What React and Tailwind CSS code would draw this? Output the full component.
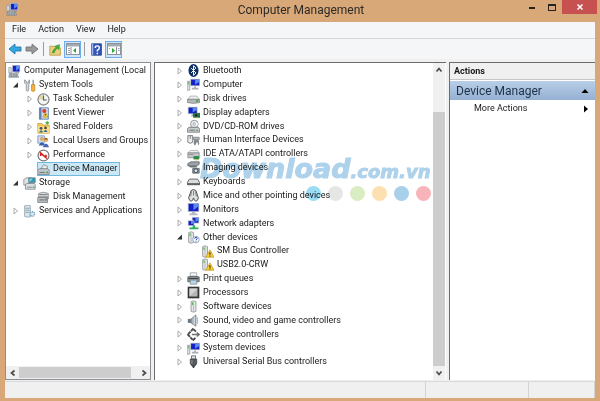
import React, { useState } from "react";
import clsx from "clsx";

/* ---------- icons ---------- */

function Svg({ children, className = "h-[13px] w-[13px]" }) {
  return (
    <svg viewBox="0 0 16 16" className={clsx("shrink-0", className)} aria-hidden="true">
      {children}
    </svg>
  );
}

const Screen = ({ x = 4, y = 1, w = 11, h = 9 }) => (
  <>
    <rect x={x} y={y} width={w} height={h} fill="#b9bfca" />
    <rect x={x + 1} y={y + 1} width={w - 2} height={h - 2} fill="#1420c8" />
    <path d={`M${x + w / 2} ${y + 1}H${x + w - 1}V${y + 4}L${x + w / 2} ${y + h - 2}Z`} fill="#5b8df0" />
  </>
);

const Tower = ({ x = 4 }) => (
  <>
    <path d={`M${x} 2l3-1 3 1v12l-3 1-3-1z`} fill="#e3e5e6" stroke="#85898c" strokeWidth=".9" />
    <path d={`M${x + 3} 3v11`} stroke="#b3b7b9" />
    <rect x={x + 1} y="3" width="1.5" height="3" fill="#4db848" />
  </>
);

const ICONS = {
  management: (
    <>
      <Screen x={5} y={0} w={10} h={9} />
      <path d="M1 3h3v7H1z" fill="#dfe3e8" stroke="#8d949c" strokeWidth=".8" />
      <path d="M2 10h9l2 5H1z" fill="#b9bfc6" stroke="#707880" strokeWidth=".8" />
      <path d="M3 12h8M3 13.7h8" stroke="#59626b" strokeWidth=".8" strokeDasharray="2 1" />
      <path d="M9 9h4v2" fill="none" stroke="#8c939b" />
    </>
  ),
  tools: (
    <>
      <path d="M2 1v4l2 2v7q1.500 2 3 0V7l1-2V1L6.500 3v2h-2V3z" fill="#d7dadd" stroke="#7c8388" strokeWidth=".9" />
      <path d="M12.500 1v7" stroke="#8b9095" strokeWidth="1.600" />
      <path d="M10.500 7h4v7.500q-2 1.500-4 0z" fill="#f5b43a" stroke="#b97a17" strokeWidth=".8" />
    </>
  ),
  clock: (
    <>
      <circle cx="8" cy="8" r="6.800" fill="#f4f4f0" stroke="#818487" strokeWidth="1.500" />
      <path d="M8 8V2.500A5.500 5.500 0 0 0 2.500 8z" fill="#e0d7a6" />
      <path d="M8 3v5.500h4" fill="none" stroke="#4b5c74" strokeWidth="1.300" />
    </>
  ),
  event: (
    <>
      <path d="M3 1h11v14H3z" fill="#c9dcf3" stroke="#5676a8" />
      <path d="M3 1h2.500v14H3z" fill="#5f80b6" />
      <circle cx="9" cy="5" r="2.600" fill="#e33a2a" />
      <path d="M10.500 6.500l3 6H7z" fill="#f8cf35" stroke="#b58d11" strokeWidth=".7" />
      <path d="M10.400 8.500v2" stroke="#333" />
    </>
  ),
  sharedFolder: (
    <>
      <path d="M1 3h5l1 2h8v10H1z" fill="#f3cc62" stroke="#c09330" strokeWidth=".9" />
      <path d="M1 7h14v8H1z" fill="#f9de8d" />
      <circle cx="5" cy="9" r="1.700" fill="#3e4f6e" />
      <path d="M2.500 14q2.500-5 5 0z" fill="#3c7b58" />
      <circle cx="10.500" cy="8.500" r="1.700" fill="#5f4630" />
      <path d="M8 13.500q2.500-5 5 0z" fill="#3667a8" />
      <path d="M10 2l3-2 2 2-2 3z" fill="#49b545" />
    </>
  ),
  users: (
    <>
      <path d="M1 1h8v9H1z" fill="#cfe0f6" stroke="#6484b8" strokeWidth=".9" />
      <circle cx="6" cy="5" r="2.500" fill="#dba867" />
      <path d="M2 13q4-8 8 0z" fill="#3761a8" />
      <circle cx="11" cy="6" r="2.700" fill="#e2b16c" />
      <path d="M8.400 5.500q2.500-4 5.200 0z" fill="#8a5b1e" />
      <path d="M7 15q4-9 8 0z" fill="#4c66b4" />
    </>
  ),
  performance: (
    <>
      <circle cx="8" cy="8" r="6.700" fill="#fff" stroke="#77797b" strokeWidth="1.500" />
      <path d="M4.500 8.500V5L11 10.500V7" fill="none" stroke="#d5211b" strokeWidth="2" />
    </>
  ),
  deviceManager: (
    <>
      <path d="M5 7l3-5 5 2-1 5z" fill="#e9ebec" stroke="#7b8186" strokeWidth=".9" />
      <path d="M1 9l2-2h10l2 2v5H1z" fill="#c3c8cb" stroke="#686e73" strokeWidth=".9" />
      <path d="M3 11.500h7" stroke="#596066" />
      <rect x="11.500" y="10.500" width="2" height="2" fill="#3aa83a" />
    </>
  ),
  storage: (
    <>
      <path d="M1 3l3-2h5v9H1z" fill="#dfe3e5" stroke="#7e868b" strokeWidth=".9" />
      <path d="M7 1h8v6H7z" fill="#2f9bb4" stroke="#6a7b82" strokeWidth=".9" />
      <path d="M8 2h4l-4 4z" fill="#86dcea" />
      <path d="M3 9l2-1h9l1 1v6H3z" fill="#dde0e2" stroke="#757c81" strokeWidth=".9" />
      <path d="M5 12.500h6" stroke="#777" />
      <rect x="12" y="11.500" width="2" height="2" fill="#44b53f" />
    </>
  ),
  disk: (
    <>
      <path d="M2 3q6-3 12 0v4H2z" fill="#d9dcde" stroke="#7a8084" strokeWidth=".9" />
      <path d="M3 4.500h10" stroke="#5e6468" />
      <path d="M1 8h12v6H1z" fill="#bfc4c7" stroke="#63696d" strokeWidth=".9" />
      <path d="M3 11h6" stroke="#4f5559" />
      <path d="M9 10l5-3 1 2-5 4z" fill="#8a9094" />
    </>
  ),
  services: (
    <>
      <path d="M2 1l4-1 3 1v13l-3 1-4-1z" fill="#dce5ea" stroke="#8198a5" strokeWidth=".9" />
      <path d="M3 4h5M3 6.500h5M3 9h5" stroke="#8299a5" />
      <circle cx="11.500" cy="11" r="2.700" fill="#dcecf6" stroke="#6a9cbd" strokeWidth="1.600" strokeDasharray="1.500 .7" />
      <circle cx="8.500" cy="14" r="1.300" fill="#9fc4da" />
    </>
  ),
  bluetooth: (
    <>
      <ellipse cx="8" cy="8" rx="6.200" ry="7.900" fill="#0d2f63" />
      <path d="M5 5l6 6-3 3V2l3 3-6 6" fill="none" stroke="#fff" strokeWidth="1.200" />
    </>
  ),
  computer: (
    <>
      <Screen x={4} y={1} w={12} h={9} />
      <path d="M9 10h2v2h3v2H6v-2h3z" fill="#a9afb6" />
      <path d="M0 4h3.500v11H0z" fill="#dadde0" stroke="#8c9298" strokeWidth=".8" />
      <rect x="1" y="5" width="1.500" height="3" fill="#65b65c" />
    </>
  ),
  diskDrive: (
    <>
      <path d="M1 9l3-4h8l3 4z" fill="#eceeee" stroke="#999d9f" strokeWidth=".8" />
      <path d="M0.500 9h15v4q-7.500 2-15 0z" fill="#b5b9bb" stroke="#6d7173" strokeWidth=".8" />
      <rect x="11" y="10" width="3" height="2" fill="#38a838" />
    </>
  ),
  display: (
    <>
      <Screen x={1} y={1} w={12} h={9} />
      <path d="M6 10h3v3H5z" fill="#a6acb3" />
      <path d="M8 9h8v5H8z" fill="#257849" stroke="#194e33" strokeWidth=".7" />
      <path d="M9 14.500h6" stroke="#d1ad3d" strokeDasharray="1 .7" />
      <rect x="10" y="10.500" width="2.500" height="2" fill="#111" />
    </>
  ),
  dvd: (
    <>
      <circle cx="9" cy="5" r="4.700" fill="#e7e9ea" stroke="#868b8e" />
      <path d="M9 5l4-2v4z" fill="#fff" />
      <circle cx="9" cy="5" r="1.400" fill="#fff" stroke="#858a8e" strokeWidth=".8" />
      <path d="M2 9h12l1.500 2v4H.5v-4z" fill="#c7cbcd" stroke="#666c70" strokeWidth=".9" />
      <path d="M3 12.500h7" stroke="#5f6569" />
      <rect x="11.500" y="12" width="2" height="1.500" fill="#41aa41" />
    </>
  ),
  hid: (
    <>
      <path d="M1 2h6v8q-3 3-6 0z" fill="#eceeee" stroke="#63676a" />
      <path d="M4 2v4" stroke="#63676a" />
      <path d="M8 4h7v3H8z" fill="#b2b6b9" stroke="#696e71" strokeWidth=".8" />
      <path d="M9 7q-2 6 1 7l2-4h1l1 4q2-2 0-7z" fill="#82878b" />
    </>
  ),
  ide: (
    <>
      <path d="M1 6l3-3h9l2 3z" fill="#f0f1f1" stroke="#999d9f" strokeWidth=".8" />
      <path d="M1 6h14v6H1z" fill="#c2c6c8" stroke="#75797b" strokeWidth=".8" />
      <path d="M2 8h6" stroke="#868b8e" />
      <path d="M8 10h7v4H8z" fill="#27894a" />
      <path d="M9 14.500h5" stroke="#d0b34a" />
    </>
  ),
  imaging: (
    <>
      <path d="M1 3l4-2h10v3l-3 2H1z" fill="#9da4a9" stroke="#565d62" strokeWidth=".9" />
      <path d="M2 6h10v2H4z" fill="#6f777d" />
      <path d="M7 9h8v6H7z" fill="#8e989f" stroke="#464f56" strokeWidth=".8" />
      <circle cx="11" cy="12" r="2.300" fill="#dceaf4" stroke="#333b41" />
    </>
  ),
  keyboard: (
    <>
      <path d="M3 5h10l2.500 4v3H.5V9z" fill="#ced1d3" stroke="#54585a" />
      <path d="M3 7h10M2.500 9h11" stroke="#f5f5f5" strokeDasharray="1.500 .7" />
      <path d="M.5 11h15" stroke="#3c4042" strokeWidth="1.500" />
    </>
  ),
  mouse: (
    <>
      <path d="M5 2q3-3 6 0l3 9q-1 4-3 4t-3-4q-1 4-3 4t-3-4z" fill="#dfe1e2" stroke="#4c5052" strokeWidth="1.200" />
      <path d="M8 2v6M5.500 3l-1 6M10.500 3l1 6" stroke="#666b6d" />
    </>
  ),
  monitor: (
    <>
      <Screen x={1} y={0} w={14} h={11} />
      <path d="M6 11h4v2h3v2H3v-2h3z" fill="#b4b9be" />
    </>
  ),
  network: (
    <>
      <Screen x={6} y={0} w={9} h={8} />
      <Screen x={1} y={4} w={8} h={7} />
      <path d="M7 10h3v3h4v2H3v-2h4z" fill="#24b258" />
    </>
  ),
  other: (
    <>
      <Tower x={2} />
      <circle cx="11" cy="10.500" r="4" fill="#f8fbff" stroke="#8095b5" />
      <path d="M9.500 9.500q0-1.600 1.500-1.600t1.500 1.300q0 1-1.500 1.800M11 12v1" fill="none" stroke="#2048c4" strokeWidth="1.200" />
    </>
  ),
  warning: (
    <>
      <Tower x={2} />
      <path d="M11 6l5 9H6z" fill="#fbd02f" stroke="#c59613" strokeWidth=".9" strokeLinejoin="round" />
      <path d="M11 9v3M11 13v1" stroke="#222" strokeWidth="1.300" />
    </>
  ),
  printer: (
    <>
      <path d="M4 1h8v5H4z" fill="#fafafa" stroke="#8c9092" strokeWidth=".9" />
      <path d="M1 6q7-2 14 0v6H1z" fill="#8f9599" stroke="#4d5255" strokeWidth=".9" />
      <path d="M2 8h12" stroke="#3f4447" strokeWidth="1.500" />
      <path d="M4 10h8v5H4z" fill="#b7d9ef" stroke="#7b8487" strokeWidth=".9" />
    </>
  ),
  cpu: (
    <>
      <rect x="1" y="1" width="14" height="14" fill="#2c2c2c" />
      <rect x="3" y="3" width="10" height="10" fill="#b4b6b8" />
      <path d="M3 3h10L3 13z" fill="#d2d4d5" />
      <rect x="1" y="1" width="14" height="14" fill="none" stroke="#74777a" strokeDasharray="1 1" />
    </>
  ),
  software: <Tower x={5} />,
  sound: (
    <>
      <path d="M1 6h4v5H1z" fill="#6e7a83" />
      <path d="M5 6l6-5v14l-6-4z" fill="#a9b4bb" stroke="#67737b" strokeWidth=".9" />
      <path d="M9 3v10" stroke="#e7ecef" />
      <path d="M13 4v8" stroke="#a6b2ba" strokeWidth="1.200" />
    </>
  ),
  storageCtl: (
    <>
      <path d="M11 4.500L7.500 1 1 8l6.500 7L11 11.500" fill="none" stroke="#474747" strokeWidth="2.300" strokeDasharray="4 .8" />
      <path d="M6 8h9M12 5.500L15 8l-3 2.500" fill="none" stroke="#707070" strokeWidth="1.800" />
    </>
  ),
  usb: (
    <>
      <path d="M5.500 1h5v4h-5z" fill="#e0e2e3" stroke="#5c6063" />
      <path d="M4 5h8v5q-1 3-2.500 4h-3Q5 13 4 10z" fill="#55595c" stroke="#393d40" strokeWidth=".8" />
      <path d="M6 6v5" stroke="#9da2a5" />
      <path d="M8 13v3" stroke="#333" strokeWidth="1.800" />
    </>
  ),
};

function Icon({ name, className }) {
  return <Svg className={className}>{ICONS[name]}</Svg>;
}

function Arrow({ right, gray }) {
  return (
    <svg viewBox="0 0 14 12" className={clsx("h-3 w-[14px]", right && "-scale-x-100")} aria-hidden="true">
      <path
        d="M1 6l6-5v3h6v4H7v3z"
        fill={gray ? "#9a9a9a" : "#35a7e0"}
        stroke={gray ? "#737373" : "#2278ad"}
        strokeWidth=".9"
        strokeLinejoin="round"
      />
    </svg>
  );
}

function PanelIcon({ flip }) {
  return (
    <svg viewBox="0 0 14 12" className="h-3 w-[14px]" aria-hidden="true">
      <rect x=".5" y=".5" width="13" height="11" fill="#fff" stroke="#8b9299" />
      <rect x="1" y="1" width="12" height="2.500" fill="#a3abb3" />
      <path d={flip ? "M9.500 4v7" : "M5 4v7"} stroke="#8b9299" />
      <path d={flip ? "M11 5.500h1.500M11 7.500h1.500M2 5.500h1" : "M2 5.500h2M2 7.500h2M2 9.500h2"} stroke="#9aa1a8" />
      <path d={flip ? "M5 5l3 2.500L5 10z" : "M10 5L7 7.500 10 10z"} fill="#2ba52f" />
    </svg>
  );
}

function Chevron({ dir }) {
  const paths = {
    up: "M1.500 5.500L4 2.500l2.500 3",
    down: "M1.500 2.500L4 5.500l2.500-3",
    left: "M5.500 1.500L2.500 4l3 2.500",
    right: "M2.500 1.500L5.500 4l-3 2.500",
  };
  return (
    <svg viewBox="0 0 8 8" className="h-2 w-2" aria-hidden="true">
      <path d={paths[dir]} fill="none" stroke="#4c4c4c" strokeWidth="1.700" />
    </svg>
  );
}

/* ---------- data ---------- */

const CONSOLE_TREE = [
  { label: "Computer Management (Local", icon: "management", level: 0 },
  { label: "System Tools", icon: "tools", level: 1, state: "open" },
  { label: "Task Scheduler", icon: "clock", level: 2, state: "closed" },
  { label: "Event Viewer", icon: "event", level: 2, state: "closed" },
  { label: "Shared Folders", icon: "sharedFolder", level: 2, state: "closed" },
  { label: "Local Users and Groups", icon: "users", level: 2, state: "closed" },
  { label: "Performance", icon: "performance", level: 2, state: "closed" },
  { label: "Device Manager", icon: "deviceManager", level: 2 },
  { label: "Storage", icon: "storage", level: 1, state: "open" },
  { label: "Disk Management", icon: "disk", level: 2 },
  { label: "Services and Applications", icon: "services", level: 1, state: "closed" },
];

const DEVICES = [
  { label: "Bluetooth", icon: "bluetooth", level: 1, state: "closed" },
  { label: "Computer", icon: "computer", level: 1, state: "closed" },
  { label: "Disk drives", icon: "diskDrive", level: 1, state: "closed" },
  { label: "Display adapters", icon: "display", level: 1, state: "closed" },
  { label: "DVD/CD-ROM drives", icon: "dvd", level: 1, state: "closed" },
  { label: "Human Interface Devices", icon: "hid", level: 1, state: "closed" },
  { label: "IDE ATA/ATAPI controllers", icon: "ide", level: 1, state: "closed" },
  { label: "Imaging devices", icon: "imaging", level: 1, state: "closed" },
  { label: "Keyboards", icon: "keyboard", level: 1, state: "closed" },
  { label: "Mice and other pointing devices", icon: "mouse", level: 1, state: "closed" },
  { label: "Monitors", icon: "monitor", level: 1, state: "closed" },
  { label: "Network adapters", icon: "network", level: 1, state: "closed" },
  { label: "Other devices", icon: "other", level: 1, state: "open" },
  { label: "SM Bus Controller", icon: "warning", level: 2 },
  { label: "USB2.0-CRW", icon: "warning", level: 2 },
  { label: "Print queues", icon: "printer", level: 1, state: "closed" },
  { label: "Processors", icon: "cpu", level: 1, state: "closed" },
  { label: "Software devices", icon: "software", level: 1, state: "closed" },
  { label: "Sound, video and game controllers", icon: "sound", level: 1, state: "closed" },
  { label: "Storage controllers", icon: "storageCtl", level: 1, state: "closed" },
  { label: "System devices", icon: "computer", level: 1, state: "closed" },
  { label: "Universal Serial Bus controllers", icon: "usb", level: 1, state: "closed" },
];

const DOTS = ["bg-[#9bdcf5]", "bg-[#e6e6e6]", "bg-[#daecc1]", "bg-[#fde0b1]", "bg-[#a9d0eb]", "bg-[#f9b4b9]"];

/* ---------- parts ---------- */

function Expander({ state, label }) {
  if (!state) return <span className="w-2 shrink-0" />;
  return (
    <button type="button" className="w-2 shrink-0" aria-label={`Toggle ${label}`}>
      <svg viewBox="0 0 8 8" className="h-2 w-2" aria-hidden="true">
        {state === "open" ? (
          <path d="M6 1.500V6.500H1z" fill="#333" />
        ) : (
          <path d="M2 1l3.500 3L2 7z" fill="#fff" stroke="#a3a3a3" strokeWidth=".9" />
        )}
      </svg>
    </button>
  );
}

function TreeRow({ item, selected, onSelect, className }) {
  const indent = ["pl-[2px]", "pl-[6px]", "pl-5"][item.level];
  return (
    <li role="treeitem" aria-selected={selected} className={clsx("flex items-center", indent, className)}>
      {item.level > 0 && <Expander state={item.state} label={item.label} />}
      <button
        type="button"
        onClick={onSelect}
        className={clsx(
          "flex h-[14px] items-center gap-[3px] pr-[3px] whitespace-nowrap",
          item.level > 0 && "ml-[3px]",
          selected && "bg-[#cbe8f6] outline-1 -outline-offset-1 outline-[#6fb9de]"
        )}
      >
        <Icon name={item.icon} />
        {item.label}
      </button>
    </li>
  );
}

function ToolButton({ label, active, children }) {
  return (
    <button
      type="button"
      aria-label={label}
      className={clsx(
        "flex h-[17px] w-[17px] items-center justify-center",
        active && "bg-[#cfe5fa] outline-1 -outline-offset-1 outline-[#6cadea]"
      )}
    >
      {children}
    </button>
  );
}

const Divider = () => <span className="mx-[3px] h-[14px] w-px bg-[#9c9c9c]" />;

function TitleBar() {
  return (
    <header className="-mr-[2px] grid h-[22px] shrink-0 grid-cols-[1fr_auto_1fr] items-start">
      <Icon name="management" className="mt-[3px] ml-[1px] h-[13px] w-[13px]" />
      <h1 className="text-[12px] leading-5 text-[#2d2a27]">Computer Management</h1>
      <div className="flex justify-end">
        <button type="button" aria-label="Minimize" className="flex h-[14px] w-[21px] items-end justify-center pb-[5px]">
          <span className="h-[2px] w-[6px] bg-[#26221e]" />
        </button>
        <button type="button" aria-label="Maximize" className="flex h-[14px] w-[20px] items-center justify-center">
          <span className="h-[7px] w-2 border border-t-2 border-[#26221e]" />
        </button>
        <button type="button" aria-label="Close" className="flex h-[14px] w-[35px] items-center justify-center bg-[#c75050]">
          <svg viewBox="0 0 8 8" className="h-2 w-2" aria-hidden="true">
            <path d="M1.500 1.500l5 5M6.500 1.500l-5 5" stroke="#fff" strokeWidth="1.500" />
          </svg>
        </button>
      </div>
    </header>
  );
}

function ToolbarRow() {
  return (
    <div className="flex h-[20px] shrink-0 items-center bg-[#f5f6f7] pl-[1px]">
      <ToolButton label="Back">
        <Arrow />
      </ToolButton>
      <ToolButton label="Forward">
        <Arrow right gray />
      </ToolButton>
      <Divider />
      <ToolButton label="Up one level">
        <Svg>
          <path d="M1 4h5l2 2h6v9H1z" fill="#edcf7c" stroke="#bb9845" />
          <path d="M4 12q1-5 5-6L7 4l6-2-1 6-1.500-1.500Q7 8 6.500 12z" fill="#46b13c" stroke="#2e8a2a" strokeWidth=".7" />
        </Svg>
      </ToolButton>
      <ToolButton label="Show console tree" active>
        <PanelIcon />
      </ToolButton>
      <Divider />
      <ToolButton label="Help">
        <Svg>
          <path d="M2 1h12v14H2z" fill="#3557ba" stroke="#20377f" />
          <path d="M2 1h2v14H2z" fill="#9fb1e6" />
          <path d="M6.500 6q0-2.500 2.500-2.500T11.500 6q0 1.500-2.500 3v1.500M9 12v1.700" fill="none" stroke="#fff" strokeWidth="1.700" />
        </Svg>
      </ToolButton>
      <ToolButton label="Show action pane" active>
        <PanelIcon flip />
      </ToolButton>
    </div>
  );
}

function ConsolePane() {
  const [selected, setSelected] = useState("Device Manager");

  return (
    <nav className="flex flex-col overflow-hidden border border-[#8b8f95] bg-white">
      <ul role="tree" aria-label="Console" className="flex-1 pt-px">
        {CONSOLE_TREE.map((item) => (
          <TreeRow
            key={item.label}
            item={item}
            selected={selected === item.label}
            onSelect={() => setSelected(item.label)}
            className="h-[14px]"
          />
        ))}
      </ul>
      <div className="flex h-[13px] shrink-0 items-center bg-[#f0f0f0]">
        <button type="button" aria-label="Scroll left" className="flex w-[13px] justify-center">
          <Chevron dir="left" />
        </button>
        <div className="flex h-[11px] flex-1">
          <span className="w-[95%] bg-[#cdcdcd]" />
        </div>
        <button type="button" aria-label="Scroll right" className="flex w-[13px] justify-center">
          <Chevron dir="right" />
        </button>
      </div>
    </nav>
  );
}

function DevicePane() {
  return (
    <main className="flex overflow-hidden border-t border-l border-[#6d6d6d] bg-white">
      <ul role="tree" aria-label="Devices" className="flex flex-1 flex-col pt-px pb-[11px] pl-[15px]">
        {DEVICES.map((item) => (
          <TreeRow key={item.label} item={item} selected={false} className="min-h-0 flex-1" />
        ))}
      </ul>
      <div className="mr-px flex w-3 shrink-0 flex-col items-center bg-[#f0f0f0]">
        <button type="button" aria-label="Scroll up" className="flex h-[14px] items-center">
          <Chevron dir="up" />
        </button>
        <div className="flex w-full flex-1 flex-col justify-end">
          <span className="h-[88%] bg-[#cdcdcd]" />
        </div>
        <button type="button" aria-label="Scroll down" className="flex h-[14px] items-center">
          <Chevron dir="down" />
        </button>
      </div>
    </main>
  );
}

function ActionsPane() {
  return (
    <aside className="border-t border-l border-[#6d6d6d] bg-white">
      <h2 className="h-[17px] border-b border-[#c6c6c6] bg-[#f0f0f0] pl-1 leading-4 font-bold">Actions</h2>
      <button
        type="button"
        className="mt-px flex h-[19px] w-full items-center justify-between bg-linear-to-b from-[#b9cfe8] to-[#95b0d2] pr-[6px] pl-[6px] text-[12px] text-[#1e3247]"
      >
        Device Manager
        <svg viewBox="0 0 8 6" className="h-[6px] w-2" aria-hidden="true">
          <path d="M4 1l3.500 4h-7z" fill="#000" />
        </svg>
      </button>
      <button type="button" className="flex h-[18px] w-full items-center justify-between pr-[6px] pl-6">
        More Actions
        <svg viewBox="0 0 6 8" className="h-2 w-[6px]" aria-hidden="true">
          <path d="M1 .5L5 4 1 7.500z" fill="#000" />
        </svg>
      </button>
    </aside>
  );
}

function Watermark() {
  return (
    <div className="pointer-events-none absolute top-[151px] left-[200px] mix-blend-multiply">
      <p className="h-[35px] font-['DejaVu_Sans'] text-[27px] leading-9 font-bold text-[#aed2eb] italic [-webkit-text-stroke:1px_#aed2eb]">
        Download<span className="text-[18px]">.com.vn</span>
      </p>
      <div className="flex justify-end gap-[7px]">
        {DOTS.map((dot) => (
          <span key={dot} className={clsx("h-[15px] w-[15px] rounded-full", dot)} />
        ))}
      </div>
    </div>
  );
}

export default function App() {
  return (
    <div className="relative flex h-screen flex-col overflow-hidden bg-[#d8a878] px-[5px] pb-[3px] font-['Roboto',sans-serif] text-[9px] text-[#1a1a1a]">
      <TitleBar />
      <div className="flex min-h-0 flex-1 flex-col bg-[#f0f0f0]">
        <div className="flex h-[17px] shrink-0 items-center border-b border-[#d4d6d8] bg-[#f5f6f7] pl-[1px]">
          {["File", "Action", "View", "Help"].map((item) => (
            <button key={item} type="button" className="px-[6px]">
              {item}
            </button>
          ))}
        </div>
        <ToolbarRow />
        <div className="grid min-h-0 flex-1 grid-cols-[146px_1fr_146px] gap-x-[3px] pt-[3px] pb-px">
          <ConsolePane />
          <DevicePane />
          <ActionsPane />
        </div>
        <footer className="flex h-[17px] shrink-0 justify-end border-t border-[#d9d9d9]">
          <span className="w-[103px] border-l border-[#d4d4d4]" />
          <span className="w-[67px] border-x border-[#d4d4d4]" />
        </footer>
      </div>
      <Watermark />
    </div>
  );
}
